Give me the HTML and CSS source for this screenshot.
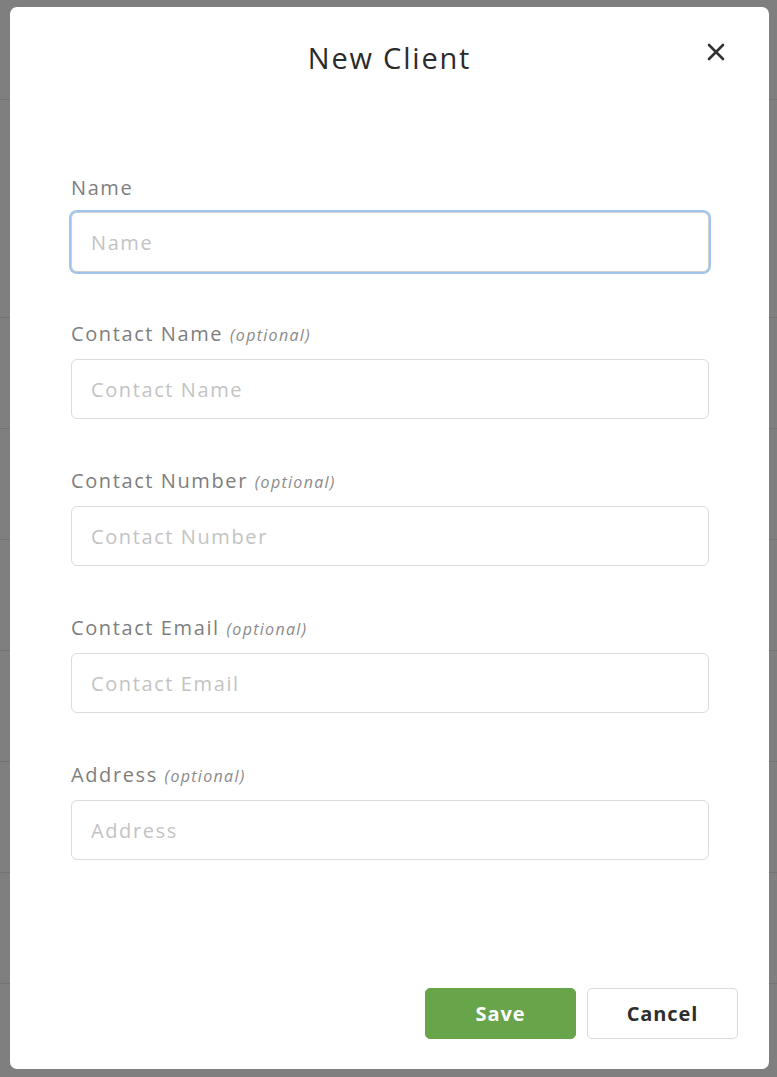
FILE: index.html
```html
<!DOCTYPE html>
<html lang="en">
<head>
<meta charset="utf-8">
<title>New Client</title>
<link rel="stylesheet" href="styles.css">
</head>
<body>
<div class="backdrop">
  <div class="row r1"></div>
  <div class="row r2"></div>
  <div class="row"></div>
  <div class="row"></div>
  <div class="row"></div>
  <div class="row"></div>
  <div class="row"></div>
  <div class="row"></div>
</div>
<div class="modal">
  <header class="modal-header">
    <span></span>
    <h1 class="modal-title">New Client</h1>
    <button class="close-btn" aria-label="Close">
      <svg width="18" height="18" viewBox="0 0 18 18"><path d="M2 2 L16 16 M16 2 L2 16" stroke="#333" stroke-width="2.6" stroke-linecap="round" fill="none"/></svg>
    </button>
  </header>
  <form class="modal-body">
    <div class="field">
      <label class="label">Name</label>
      <input class="input focused" placeholder="Name">
    </div>
    <div class="field">
      <label class="label">Contact Name <em class="opt">(optional)</em></label>
      <input class="input" placeholder="Contact Name">
    </div>
    <div class="field">
      <label class="label">Contact Number <em class="opt">(optional)</em></label>
      <input class="input" placeholder="Contact Number">
    </div>
    <div class="field">
      <label class="label">Contact Email <em class="opt">(optional)</em></label>
      <input class="input" placeholder="Contact Email">
    </div>
    <div class="field">
      <label class="label">Address <em class="opt">(optional)</em></label>
      <input class="input" placeholder="Address">
    </div>
  </form>
  <footer class="modal-footer">
    <button class="btn btn-save">Save</button>
    <button class="btn btn-cancel">Cancel</button>
  </footer>
</div>
</body>
</html>
```

FILE: styles.css
```css
html, body {
  margin: 0;
  padding: 0;
}
body {
  background: #7f7f7f;
  font-family: "Open Sans", "DejaVu Sans", sans-serif;
  width: 777px;
  height: 1077px;
  overflow: hidden;
}
.backdrop {
  display: flex;
  flex-direction: column;
}
.row {
  height: 110px;
  border-bottom: 1px solid #727272;
  flex-shrink: 0;
}
.row.r1 { height: 99px; }
.row.r2 { height: 217px; }

.modal {
  position: absolute;
  top: 7px;
  left: 10px;
  width: 759px;
  height: 1062px;
  background: #fff;
  border-radius: 7px;
  display: flex;
  flex-direction: column;
  box-sizing: border-box;
}
.modal-header {
  display: grid;
  grid-template-columns: 1fr auto 1fr;
  align-items: start;
  padding: 34px 44px 0 44px;
}
.modal-title {
  margin: 0;
  font-size: 29px;
  line-height: 34px;
  font-weight: 400;
  color: #2b2b2b;
  letter-spacing: 1.8px;
}
.close-btn {
  justify-self: end;
  background: none;
  border: 0;
  padding: 0;
  margin-top: 2px;
  width: 18px;
  height: 18px;
  display: flex;
}
.modal-body {
  flex: 1;
  padding: 101px 60px 0 61px;
  display: flex;
  flex-direction: column;
  gap: 50px;
}
.field {
  display: flex;
  flex-direction: column;
  gap: 12px;
}
.label {
  font-size: 20px;
  line-height: 24px;
  color: #7e7e7e;
  letter-spacing: 1.6px;
}
.opt {
  font-size: 16px;
  color: #8a8a8a;
  letter-spacing: 1.3px;
}
.input {
  box-sizing: border-box;
  height: 60px;
  width: 100%;
  border: 1px solid #dcdcdc;
  border-radius: 6px;
  padding: 0 19px;
  font-family: "Open Sans", "DejaVu Sans", sans-serif;
  font-size: 20px;
  letter-spacing: 1.6px;
  color: #333;
  outline: none;
  background: #fff;
}
.input::placeholder {
  color: #c3c3c3;
}
.input.focused {
  border-color: #cfcfcf;
  box-shadow: 0 0 0 2px #9fc6ea;
}
.modal-footer {
  display: flex;
  justify-content: flex-end;
  gap: 11px;
  padding: 0 31px 30px 0;
}
.btn {
  width: 151px;
  height: 51px;
  border-radius: 5px;
  font-family: "Open Sans", "DejaVu Sans", sans-serif;
  font-size: 20px;
  font-weight: 700;
  letter-spacing: 0.9px;
}
.btn-save {
  background: #68a54a;
  border: 1px solid #68a54a;
  color: #fff;
}
.btn-cancel {
  background: #fff;
  border: 1px solid #dadada;
  color: #2e2e2e;
}
```
